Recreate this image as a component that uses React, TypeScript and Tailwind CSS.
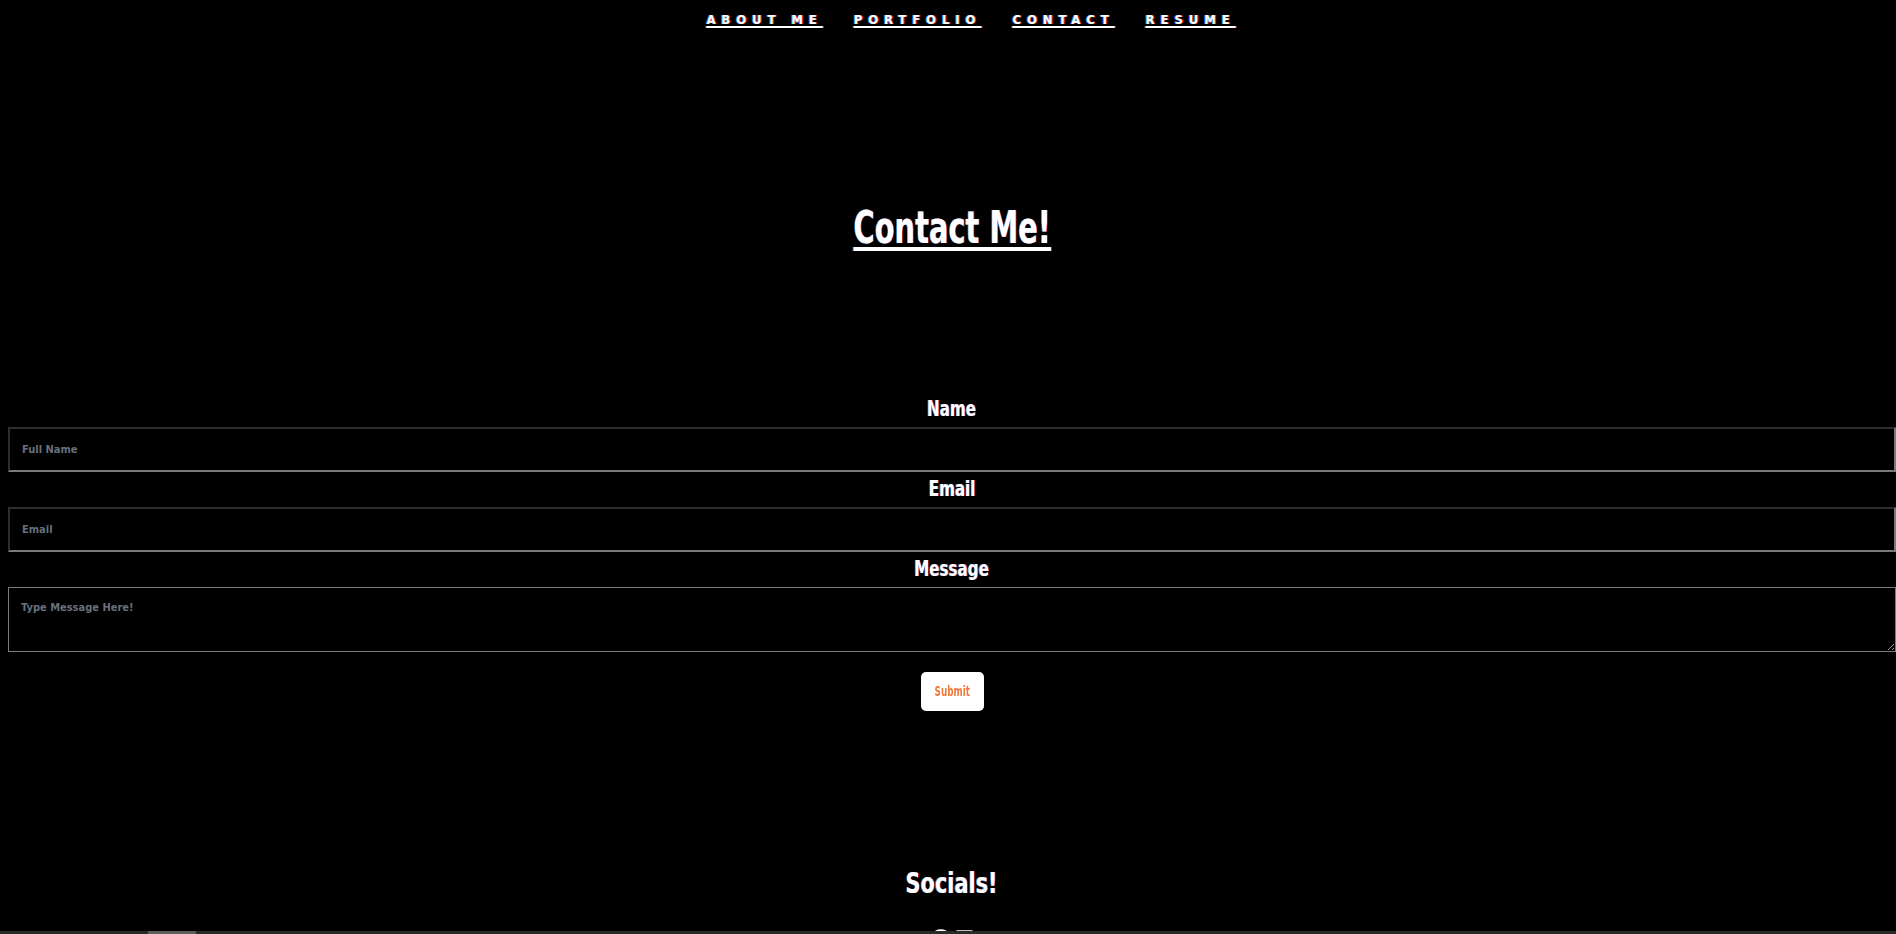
import React from "react";
import { FaGithub, FaLinkedin } from "react-icons/fa";

const font = "[font-family:'Liberation_Sans_Narrow','DejaVu_Sans_Condensed','Liberation_Sans',sans-serif]";
const glitch = "[text-shadow:-1px_0_rgba(40,150,255,0.85),1px_0_rgba(255,60,40,0.85)]";

function Label({ children, className = "" }: { children: React.ReactNode; className?: string }) {
  return (
    <label className={`block h-[26px] text-center text-[21px] leading-[26px] font-bold ${className}`}>
      <span className={`inline-block scale-x-[0.8] ${glitch}`}>{children}</span>
    </label>
  );
}

const inputCls =
  "mt-[5px] ml-[8px] w-[1888px] h-[45px] bg-black border-2 border-t-[#2e2e2e] border-l-[#2e2e2e] border-b-[#7a7a7a] border-r-[#7a7a7a] pl-[12px] text-[11px] font-bold text-white placeholder:text-[#67717d] outline-none";

export default function App() {
  const navItems = ["ABOUT ME", "PORTFOLIO", "CONTACT", "RESUME"];
  return (
    <div className={`relative w-full h-[934px] overflow-hidden bg-black text-white ${font}`}>
      <div className="w-[1904px]">
        <nav className="flex justify-center gap-[31px] pt-[12px] pl-[38px]">
          {navItems.map((n) => (
            <a
              key={n}
              href="#"
              className={`block text-[13px] leading-[16px] font-bold tracking-[5.9px] underline decoration-[1.5px] underline-offset-[2px] ${glitch}`}
            >
              {n}
            </a>
          ))}
        </nav>

        <h1 className="mt-[174px] text-center text-[44px] leading-[52px] font-bold">
          <span
            className={`inline-block scale-x-[0.73] underline decoration-[4px] underline-offset-[4px] ${glitch}`}
          >
            Contact Me!
          </span>
        </h1>

        <form className="mt-[142px] flex flex-col" onSubmit={(e) => e.preventDefault()}>
          <Label>Name</Label>
          <input placeholder="Full Name" className={inputCls} />
          <Label className="mt-[4px]">Email</Label>
          <input placeholder="Email" className={inputCls} />
          <Label className="mt-[4px]">Message</Label>
          <textarea
            placeholder="Type Message Here!"
            className="mt-[5px] ml-[8px] w-[1888px] h-[65px] bg-black border border-[#7a7a7a] pl-[12px] pt-[13px] text-[11px] leading-[14px] font-bold text-white placeholder:text-[#67717d] outline-none"
          />
          <div className="mt-[20px] flex justify-center">
            <button
              type="submit"
              className="w-[63px] h-[39px] rounded-[5px] bg-white text-[14px] font-bold text-[#f07a3c]"
            >
              <span className="inline-block scale-x-[0.7]">Submit</span>
            </button>
          </div>
        </form>

        <h2 className="mt-[154px] text-center text-[29px] leading-[36px] font-bold">
          <span className={`inline-block scale-x-[0.8] ${glitch}`}>Socials!</span>
        </h2>
        <div className="mt-[28px] flex justify-center gap-[3px]">
          <FaGithub className="w-[22px] h-[22px] text-white" />
          <FaLinkedin className="w-[19px] h-[19px] text-white" />
        </div>
      </div>

      <div className="absolute bottom-0 left-0 right-0 h-[3px] bg-[#2a2a2a]">
        <div className="ml-[148px] w-[48px] h-full bg-[#5c5c5c]" />
      </div>
    </div>
  );
}
